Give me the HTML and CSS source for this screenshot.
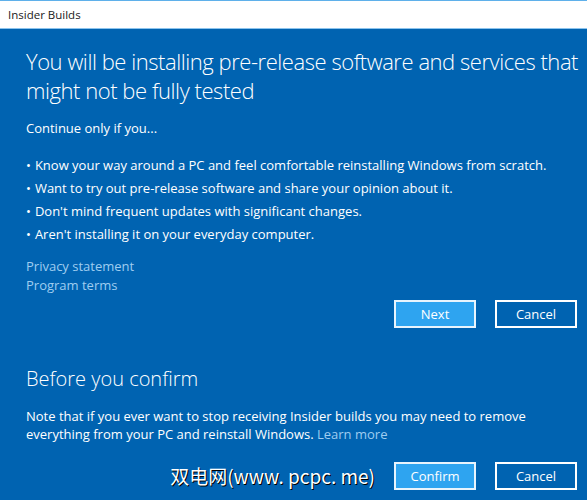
FILE: index.html
```html
<!DOCTYPE html>
<html lang="en">
<head>
<meta charset="utf-8">
<title>Insider Builds</title>
<link rel="stylesheet" href="styles.css">
</head>
<body>
<div class="titlebar">Insider Builds</div>
<main class="dialog">
  <h1 class="heading">You will be installing pre-release software and services that might not be fully tested</h1>
  <p class="lead">Continue only if you...</p>
  <ul class="bullets">
    <li>Know your way around a PC and feel comfortable reinstalling Windows from scratch.</li>
    <li>Want to try out pre-release software and share your opinion about it.</li>
    <li>Don't mind frequent updates with significant changes.</li>
    <li>Aren't installing it on your everyday computer.</li>
  </ul>
  <div class="links">
    <a class="link" href="#">Privacy statement</a>
    <a class="link" href="#">Program terms</a>
  </div>
  <div class="actions">
    <button class="btn primary">Next</button>
    <button class="btn">Cancel</button>
  </div>
  <h2 class="subheading">Before you confirm</h2>
  <p class="note">Note that if you ever want to stop receiving Insider builds you may need to remove everything from your PC and reinstall Windows. <a class="link" href="#">Learn more</a></p>
  <div class="actions bottom">
    <span class="watermark">双电网(www. pcpc. me)</span>
    <button class="btn primary">Confirm</button>
    <button class="btn">Cancel</button>
  </div>
</main>
</body>
</html>
```

FILE: styles.css
```css
html, body {
  margin: 0;
  padding: 0;
}
body {
  width: 587px;
  height: 500px;
  overflow: hidden;
  background: #0063b1;
  font-family: "Open Sans", "Noto Sans", sans-serif;
  color: #ffffff;
}
.titlebar {
  height: 27px;
  background: #ffffff;
  border-top: 1px solid #5fb0ea;
  border-bottom: 1px solid #8cc4ee;
  color: #1a1a1a;
  font-size: 11.5px;
  line-height: 27px;
  padding-left: 8px;
  box-sizing: content-box;
}
.dialog {
  padding: 0 10px 0 26px;
  display: flex;
  flex-direction: column;
}
.heading {
  margin: 18px -8px 0 0;
  font-size: 22px;
  font-weight: 300;
  line-height: 29px;
  letter-spacing: -0.45px;
}
.lead {
  margin: 13px 0 0;
  font-size: 13px;
  line-height: 20px;
}
.bullets {
  margin: 16px 0 0;
  padding: 0;
  list-style: none;
  font-size: 13px;
  line-height: 23px;
}
.bullets li::before {
  content: "\2022";
  margin-right: 4px;
}
.links {
  margin-top: 11px;
  display: flex;
  flex-direction: column;
  font-size: 13px;
  line-height: 19px;
}
.link {
  color: #9fcdf0;
  text-decoration: none;
}
.actions {
  margin-top: 5px;
  display: flex;
  justify-content: flex-end;
  align-items: center;
  gap: 19px;
}
.btn {
  flex-shrink: 0;
  width: 82px;
  height: 28px;
  border: 2px solid #ffffff;
  background: transparent;
  color: #ffffff;
  font-family: inherit;
  font-size: 13px;
  padding: 0;
}
.btn.primary {
  background: #2ea4f0;
  border-color: #e8f4fd;
}
.subheading {
  margin: 37px 0 0;
  font-size: 20px;
  font-weight: 300;
  line-height: 28px;
}
.note {
  margin: 14px 0 0;
  font-size: 13px;
  line-height: 18px;
}
.actions.bottom {
  margin-top: 19px;
}
.watermark {
  flex-shrink: 0;
  white-space: nowrap;
  margin-right: auto;
  margin-left: 146px;
  font-family: "Noto Sans CJK SC", "Liberation Sans", sans-serif;
  font-size: 19px;
  line-height: 24px;
  color: #ffffff;
  text-shadow: 1px 1px 0 #000000;
}
```
